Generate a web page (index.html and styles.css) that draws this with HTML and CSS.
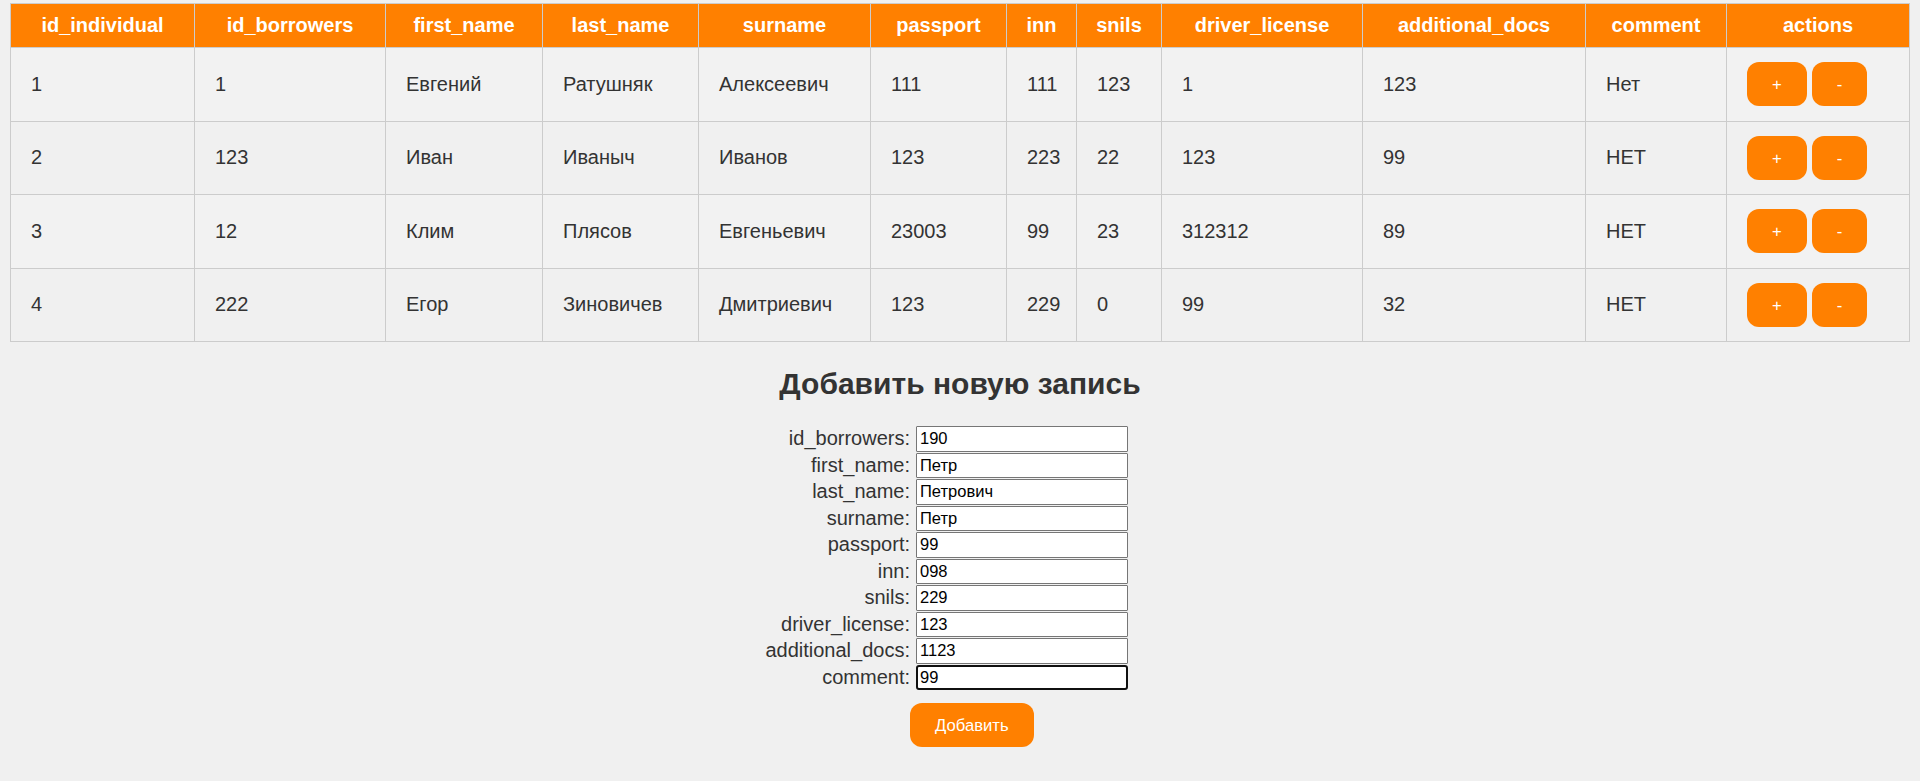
FILE: index.html
```html
<!DOCTYPE html>
<html lang="ru">
<head>
<meta charset="utf-8">
<title>Физические лица</title>
<link rel="stylesheet" href="styles.css">
</head>
<body>
<table class="data">
  <colgroup>
    <col class="c-id"><col class="c-borr"><col class="c-first"><col class="c-last"><col class="c-sur"><col class="c-pass"><col class="c-inn"><col class="c-snils"><col class="c-drv"><col class="c-add"><col class="c-com"><col class="c-act">
  </colgroup>
  <thead>
    <tr>
      <th>id_individual</th><th>id_borrowers</th><th>first_name</th><th>last_name</th><th>surname</th><th>passport</th><th>inn</th><th>snils</th><th>driver_license</th><th>additional_docs</th><th>comment</th><th>actions</th>
    </tr>
  </thead>
  <tbody>
    <tr>
      <td>1</td><td>1</td><td>Евгений</td><td>Ратушняк</td><td>Алексеевич</td><td>111</td><td>111</td><td>123</td><td>1</td><td>123</td><td>Нет</td>
      <td><div class="acts"><button class="btn">+</button><button class="btn">-</button></div></td>
    </tr>
    <tr>
      <td>2</td><td>123</td><td>Иван</td><td>Иваныч</td><td>Иванов</td><td>123</td><td>223</td><td>22</td><td>123</td><td>99</td><td>НЕТ</td>
      <td><div class="acts"><button class="btn">+</button><button class="btn">-</button></div></td>
    </tr>
    <tr>
      <td>3</td><td>12</td><td>Клим</td><td>Плясов</td><td>Евгеньевич</td><td>23003</td><td>99</td><td>23</td><td>312312</td><td>89</td><td>НЕТ</td>
      <td><div class="acts"><button class="btn">+</button><button class="btn">-</button></div></td>
    </tr>
    <tr>
      <td>4</td><td>222</td><td>Егор</td><td>Зиновичев</td><td>Дмитриевич</td><td>123</td><td>229</td><td>0</td><td>99</td><td>32</td><td>НЕТ</td>
      <td><div class="acts"><button class="btn">+</button><button class="btn">-</button></div></td>
    </tr>
  </tbody>
</table>

<h2 class="title">Добавить новую запись</h2>

<form class="add-form">
  <div class="fields">
    <label class="lbl" for="f1">id_borrowers:</label><input class="inp" id="f1" type="text" value="190">
    <label class="lbl" for="f2">first_name:</label><input class="inp" id="f2" type="text" value="Петр">
    <label class="lbl" for="f3">last_name:</label><input class="inp" id="f3" type="text" value="Петрович">
    <label class="lbl" for="f4">surname:</label><input class="inp" id="f4" type="text" value="Петр">
    <label class="lbl" for="f5">passport:</label><input class="inp" id="f5" type="text" value="99">
    <label class="lbl" for="f6">inn:</label><input class="inp" id="f6" type="text" value="098">
    <label class="lbl" for="f7">snils:</label><input class="inp" id="f7" type="text" value="229">
    <label class="lbl" for="f8">driver_license:</label><input class="inp" id="f8" type="text" value="123">
    <label class="lbl" for="f9">additional_docs:</label><input class="inp" id="f9" type="text" value="1123">
    <label class="lbl" for="f10">comment:</label><input class="inp inp-focus" id="f10" type="text" value="99">
  </div>
  <div class="submit-row">
    <button class="btn btn-submit" type="button">Добавить</button>
  </div>
</form>
</body>
</html>
```
FILE: styles.css
```css
html, body {
  background: #f0f0f0;
}
body {
  margin: 3px 10px 10px;
  font-family: "Liberation Sans", Arial, sans-serif;
  font-size: 20px;
  color: #333;
}

.data {
  width: 100%;
  table-layout: fixed;
  border-collapse: collapse;
  border: 1px solid #ccc;
}
.c-id { width: 184px; }
.c-borr { width: 191px; }
.c-first { width: 157px; }
.c-last { width: 156px; }
.c-sur { width: 172px; }
.c-pass { width: 136px; }
.c-inn { width: 70px; }
.c-snils { width: 85px; }
.c-drv { width: 201px; }
.c-add { width: 223px; }
.c-com { width: 141px; }
.c-act { width: 183px; }

.data th {
  background: #ff8000;
  color: #fff;
  font-weight: bold;
  text-align: center;
  padding: 10px 10px;
  border: 1px solid #ccc;
  line-height: 23px;
  white-space: nowrap;
}
.data td {
  padding: 14.25px 20px;
  border: 1px solid #ccc;
  text-align: left;
  vertical-align: middle;
  line-height: 23px;
}
.data tbody tr:nth-child(odd) td {
  background: #f2f2f2;
}
.data tbody tr:nth-child(even) td {
  background: #f0f0f0;
}

.acts {
  display: flex;
  gap: 5px;
}

.btn {
  font-family: "Liberation Sans", Arial, sans-serif;
  font-size: 16.67px;
  line-height: 19px;
  color: #fff;
  background: #ff8000;
  border: none;
  border-radius: 12px;
  padding: 13px 25px 12px;
  cursor: pointer;
}

.title {
  text-align: center;
  font-size: 30px;
  font-weight: bold;
  margin: 25px 0 25px;
  line-height: 34px;
  color: #333;
}

.fields {
  display: grid;
  grid-template-columns: calc(50% - 50px) 212px;
  column-gap: 6px;
  row-gap: 1px;
  align-items: center;
}
.lbl {
  text-align: right;
  font-size: 20px;
  line-height: 23px;
  color: #333;
}
.inp {
  box-sizing: border-box;
  width: 212px;
  height: 25.5px;
  margin: 0;
  padding: 1px 3px;
  border: 1px solid #767676;
  border-radius: 1px;
  background: #fff;
  font-family: "Liberation Sans", Arial, sans-serif;
  font-size: 16.5px;
  color: #000;
  outline: none;
}
.inp-focus {
  border: 2px solid #101010;
  border-radius: 3px;
  padding: 0 2px;
}

.submit-row {
  padding-left: calc(50% - 50px);
  margin-top: 13px;
}
.btn-submit {
  display: block;
}
```
